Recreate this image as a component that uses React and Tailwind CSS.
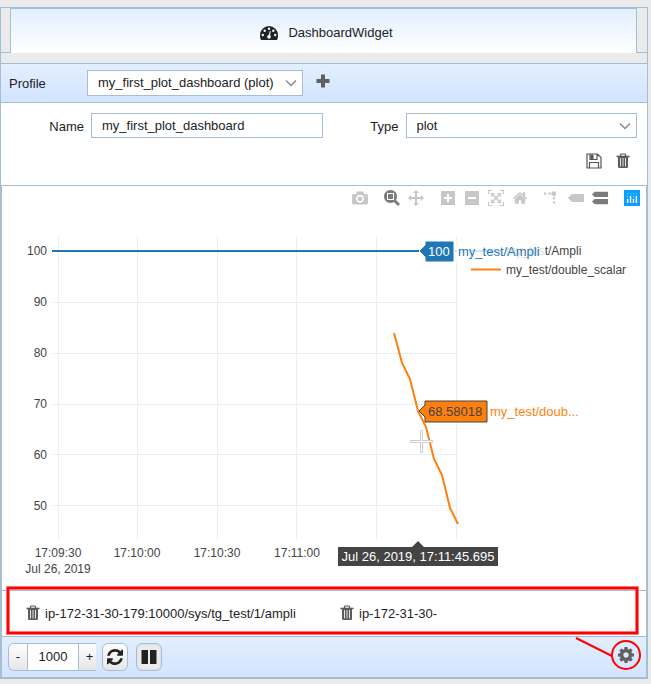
import React from "react";

const MODE_ICONS = {
  camera: {
    width: 1000,
    path: "m500 450c-83 0-150-67-150-150 0-83 67-150 150-150 83 0 150 67 150 150 0 83-67 150-150 150z m400 150h-120c-16 0-34 13-39 29l-31 93c-6 15-23 28-40 28h-340c-16 0-34-13-39-28l-31-94c-6-15-23-28-40-28h-120c-55 0-100-45-100-100v-450c0-55 45-100 100-100h800c55 0 100 45 100 100v450c0 55-45 100-100 100z m-400-550c-138 0-250 112-250 250 0 138 112 250 250 250 138 0 250-112 250-250 0-138-112-250-250-250z m365 380c-19 0-35 16-35 35 0 19 16 35 35 35 19 0 35-16 35-35 0-19-16-35-35-35z",
  },
  zoom: {
    width: 1000,
    path: "m1000-25l-250 251c40 63 63 138 63 218 0 224-182 406-407 406-224 0-406-182-406-406s183-406 407-406c80 0 155 22 218 62l250-250 125 125z m-812 250l0 438 437 0 0-438-437 0z m62 375l313 0 0-312-313 0 0 312z",
  },
  pan: {
    width: 1000,
    path: "m1000 350l-187 188 0-125-250 0 0 250 125 0-188 187-187-187 125 0 0-250-250 0 0 125-188-188 186-187 0 125 252 0 0-250-125 0 187-188 188 188-125 0 0 250 250 0 0-126 187 188z",
  },
  zoomIn: {
    width: 875,
    path: "m1 787l0-875 875 0 0 875-875 0z m687-500l-187 0 0-187-125 0 0 187-188 0 0 125 188 0 0 187 125 0 0-187 187 0 0-125z",
  },
  zoomOut: {
    width: 875,
    path: "m0 788l0-876 875 0 0 876-875 0z m688-500l-500 0 0 125 500 0 0-125z",
  },
  autoscale: {
    width: 1000,
    path: "m250 850l-187 0-63 0 0-62 0-188 63 0 0 188 187 0 0 62z m688 0l-188 0 0-62 188 0 0-188 62 0 0 188 0 62-62 0z m-875-938l0 188-63 0 0-188 0-62 63 0 187 0 0 62-187 0z m875 188l0-188-188 0 0-62 188 0 62 0 0 62 0 188-62 0z m-125 188l-1 0-93-94-156 156 156 156 92-93 2 0 0 250-250 0 0-2 93-92-156-156-156 156 94 92 0 2-250 0 0-250 0 0 93 93 157-156-157-156-93 94 0 0 0-250 250 0 0 0-94 93 156 157 156-157-93-93 0 0 250 0 0 250z",
  },
  home: {
    width: 928,
    path: "m786 296v-267q0-15-11-26t-25-10h-214v214h-143v-214h-214q-15 0-25 10t-11 26v267q0 1 0 2t0 2l321 264 321-264q1-1 1-4z m124 39l-34-41q-5-5-12-6h-2q-7 0-12 3l-386 322-386-322q-7-4-13-4-7 2-12 7l-35 41q-4 5-3 13t6 12l401 334q18 15 42 15t43-15l136-114v109q0 8 5 13t13 5h107q8 0 13-5t5-13v-227l122-102q5-5 6-12t-4-13z",
  },
  spike: {
    width: 1000,
    transform: "matrix(1.5 0 0 -1.5 0 850)",
    path: "M512 409c0-57-46-104-103-104-57 0-104 47-104 104 0 57 47 103 104 103 57 0 103-46 103-103z m-327-39l92 0 0 92-92 0z m-185 0l92 0 0 92-92 0z m370-186l92 0 0 93-92 0z m0-184l92 0 0 92-92 0z",
  },
  closest: {
    width: 1500,
    path: "m375 725l0 0-375-375 375-374 0-1 1125 0 0 750-1125 0z",
  },
  compare: {
    width: 1125,
    path: "m187 786l0 2-187-188 188-187 0 0 937 0 0 373-938 0z m0-499l0 1-187-188 188-188 0 0 937 0 0 376-938-1z",
  },
};

const MODE_GROUPS = [
  [["camera", "Download plot"]],
  [["zoom", "Zoom", true], ["pan", "Pan"]],
  [["zoomIn", "Zoom in"], ["zoomOut", "Zoom out"], ["autoscale", "Autoscale"], ["home", "Reset axes"]],
  [["spike", "Toggle spike lines"], ["closest", "Show closest data on hover"], ["compare", "Compare data on hover", true]],
];

function ModeButton({ icon, label, active }) {
  const { width, path, transform } = MODE_ICONS[icon];
  return (
    <button type="button" aria-label={label} className="p-1">
      <svg viewBox={`0 0 ${width} 1000`} className={active ? "size-4 fill-[#7b7b7b]" : "size-4 fill-[#c7c7c7]"}>
        <path d={path} transform={transform || "matrix(1 0 0 -1 0 850)"} />
      </svg>
    </button>
  );
}

function ModeBar() {
  return (
    <div className="flex h-6 justify-end gap-2 pr-0.5">
      {MODE_GROUPS.map((group) => (
        <div key={group[0][0]} className="flex">
          {group.map(([icon, label, active]) => (
            <ModeButton key={icon} icon={icon} label={label} active={active} />
          ))}
        </div>
      ))}
      <a href="#plotly" aria-label="Produced with Plotly" className="block p-1">
        <svg viewBox="0 0 132 132" className="size-4">
          <rect width="132" height="132" fill="#119dff" />
          <g fill="#25fefd">
            <circle cx="102" cy="30" r="6" />
            <circle cx="78" cy="30" r="6" />
            <circle cx="78" cy="54" r="6" />
            <circle cx="54" cy="30" r="6" />
            <circle cx="30" cy="30" r="6" />
            <circle cx="30" cy="54" r="6" />
          </g>
          <g stroke="#fff" strokeWidth="12" strokeLinecap="round">
            <path d="M30 78V102M78 78V102M54 54V102M102 54V102" />
          </g>
        </svg>
      </a>
    </div>
  );
}

function TrashIcon() {
  return (
    <svg viewBox="0 0 14 16" className="h-4 w-3.5 shrink-0" fill="none" stroke="#5a5a5a">
      <path d="M4.500 3V1.500Q4.500 1 5 1H9Q9.500 1 9.500 1.500V3" strokeWidth="1.200" />
      <path d="M0.500 3.500H13.500" strokeWidth="1.600" />
      <path d="M2 4H12V14Q12 15 10.500 15H3.500Q2 15 2 14Z" fill="#5a5a5a" stroke="none" />
      <path d="M4.500 5V13.500M7 5V13.500M9.500 5V13.500" stroke="#e4e4e4" strokeWidth="1" />
    </svg>
  );
}

function Chevron() {
  return (
    <svg viewBox="0 0 12 8" className="pointer-events-none absolute top-1/2 right-1.5 h-2 w-3 -translate-y-1/2" fill="none" stroke="#888" strokeWidth="1.400">
      <path d="M1 1.500L6 6.500L11 1.500" />
    </svg>
  );
}

const Y_TICKS = [[100, 251], [90, 302], [80, 353], [70, 404], [60, 455], [50, 506]];
const X_TICKS = [["17:09:30", 58], ["17:10:00", 137], ["17:10:30", 217], ["17:11:00", 297]];
const X_GRID = [58, 137, 217, 296, 376, 456];

function Chart() {
  return (
    <svg viewBox="2 210 644 380" className="block h-[380px] w-full font-['Liberation_Sans',Arial,sans-serif]" role="img" aria-label="Ampli and double_scalar over time">
      <g fill="#eee">
        {X_GRID.map((x) => <rect key={x} x={x} y="236" width="1" height="304" />)}
        {Y_TICKS.slice(1).map(([v, y]) => <rect key={v} x="52" y={v > 60 ? y : y - 1} width="405" height="1" />)}
      </g>
      <g fill="#444" fontSize="12">
        {Y_TICKS.map(([v, y]) => <text key={v} x="47" y={y + 4} textAnchor="end">{v}</text>)}
        {X_TICKS.map(([t, x]) => <text key={t} x={x} y="557" textAnchor="middle">{t}</text>)}
        <text x="58" y="573" textAnchor="middle">Jul 26, 2019</text>
        <text x="506" y="255">my_test/Ampli</text>
        <text x="506" y="274">my_test/double_scalar</text>
      </g>
      <path d="M471 251H501" stroke="#1f77b4" strokeWidth="2" />
      <path d="M471 269.500H501" stroke="#ff7f0e" strokeWidth="2" />
      <path d="M52 251H457" stroke="#1f77b4" strokeWidth="2" />
      <path d="M394 333L402 363L410 379L418 411L426 427L434 459L442 475L450 508L458 524" fill="none" stroke="#ff7f0e" strokeWidth="2" />

      <rect x="454" y="241" width="91" height="21" fill="#fff" opacity="0.8" />
      <path d="M419 251L425 245V241H454V262H425V257Z" fill="#1f77b4" stroke="#fff" />
      <text x="428" y="256" fontSize="13" fill="#fff">100</text>
      <text x="458" y="256" fontSize="13" fill="#1f77b4">my_test/Ampli</text>

      <path d="M419 411L425 405V401H487V422H425V417Z" fill="#ff7f0e" stroke="#444" />
      <text x="428" y="416" fontSize="13" fill="#444">68.58018</text>
      <text x="490" y="416" fontSize="13" fill="#ff7f0e">my_test/doub...</text>

      <path d="M420.500 430.500H422.500V440.500H432.500V442.500H422.500V452.500H420.500V442.500H410.500V440.500H420.500Z" fill="#fff" stroke="#ccc" strokeWidth="1" />

      <path d="M418 541L424 547H498V566H338V547H412Z" fill="#444" />
      <text x="418" y="561" fontSize="13" fill="#fff" textAnchor="middle">Jul 26, 2019, 17:11:45.695</text>
    </svg>
  );
}

const fieldClass = "w-full appearance-none border border-[#a4bed4] bg-white px-2.5 text-[13px] text-[#222] outline-none";

export default function App() {
  return (
    <div className="min-h-screen bg-[#ebebeb] pt-[7px] pr-[3px] font-['Liberation_Sans',Arial,sans-serif] text-[13px] text-[#222]">
      <main className="border border-[#a4bed4]">
        <header className="mb-2.5 flex h-[45px]">
          <div className="w-2.5 border-r border-b border-[#a4bed4]" />
          <h1 className="flex flex-1 items-center justify-center gap-2.5 border-t border-[#a4bed4] bg-linear-to-b from-[#e2efff] to-white pt-1 pl-1.5">
            <svg viewBox="0 0 18 14" className="h-3.5 w-[18px]">
              <path d="M9 0A9 9 0 0 0 0 9C0 11 .3 12.700 .8 13.500Q1 14 1.500 14H16.500Q17 14 17.200 13.500C17.700 12.700 18 11 18 9A9 9 0 0 0 9 0Z" fill="#222" />
              <g fill="#f2f8ff">
                <circle cx="2.800" cy="9" r="1.200" /><circle cx="4.700" cy="4.700" r="1.200" /><circle cx="9" cy="2.800" r="1.200" />
                <circle cx="13.300" cy="4.700" r="1.200" /><circle cx="15.200" cy="9" r="1.200" /><circle cx="9" cy="10.800" r="1.900" />
                <path d="M8.500 10L9.800 5L10.800 5.200L9.800 10.500Z" />
              </g>
            </svg>
            <span>DashboardWidget</span>
          </h1>
          <div className="w-[11px] border-b border-l border-[#a4bed4]" />
        </header>

        <div className="flex h-10 items-center border-y border-[#a4bed4] bg-linear-to-b from-[#e2efff] to-[#d3e4ff] pl-2">
          <label htmlFor="profile" className="w-[78px] pt-0.5">Profile</label>
          <div className="relative w-[216px]">
            <select id="profile" className={`${fieldClass} h-[26px]`}>
              <option>my_first_plot_dashboard (plot)</option>
            </select>
            <Chevron />
          </div>
          <button type="button" aria-label="Add profile" className="mb-1 ml-[13px]">
            <svg viewBox="0 0 14 14" className="size-3.5"><path d="M7 0.500V13.500M0.500 7H13.500" stroke="#606060" strokeWidth="4" /></svg>
          </button>
        </div>

        <form className="bg-white px-2.5 pt-2.5 pb-4">
          <div className="flex items-center">
            <label htmlFor="name" className="w-20 pt-0.5 pr-[7px] text-right">Name</label>
            <div className="flex-1"><input id="name" defaultValue="my_first_plot_dashboard" className={`${fieldClass} block h-[25px]`} /></div>
            <label htmlFor="type" className="w-[83px] pt-0.5 pr-[7px] text-right">Type</label>
            <div className="relative flex-1">
              <select id="type" className={`${fieldClass} block h-[25px]`}><option>plot</option></select>
              <Chevron />
            </div>
          </div>
          <div className="mt-[15px] flex justify-end gap-3.5 pr-[7px]">
            <button type="button" aria-label="Save">
              <svg viewBox="0 0 16 16" className="size-4" fill="none" stroke="#555" strokeWidth="1.200">
                <path d="M1 1H11.500L15 4.500V15H1ZM3.500 15V9.500H12.500V15M4 1V6.500H11V1" />
                <path d="M4.500 1.500H7.500V6H4.500Z" fill="#555" stroke="none" />
              </svg>
            </button>
            <button type="button" aria-label="Delete"><TrashIcon /></button>
          </div>
        </form>

        <section className="relative -mx-px -mb-px border-2 border-t border-[#a4bed4]">
          <div className="bg-white">
            <ModeBar />
            <Chart />
            <ul className="grid h-[46px] grid-cols-2 items-center border-t border-[#a4bed4] px-6">
              <li className="flex items-center gap-[5px]">
                <button type="button" aria-label="Remove ampli" className="pb-0.5"><TrashIcon /></button>
                <span>ip-172-31-30-179:10000/sys/tg_test/1/ampli</span>
              </li>
              <li className="flex items-center gap-[5px] pl-4">
                <button type="button" aria-label="Remove attribute" className="pb-0.5"><TrashIcon /></button>
                <span>ip-172-31-30-</span>
              </li>
            </ul>
          </div>
          <footer className="flex h-[41px] items-center border-t border-[#a4bed4] bg-linear-to-b from-[#e2efff] to-[#d3e4ff] pr-3 pl-1.5">
            <div className="flex h-7 w-[88px] overflow-hidden rounded-l-md border border-r-0 border-[#a4bed4]">
              <button type="button" className="w-[18px] bg-linear-to-b from-white to-[#e6e6e6]">-</button>
              <input aria-label="Update period" defaultValue="1000" className="w-[52px] border-x border-[#a4bed4] bg-white text-center outline-none" />
              <button type="button" className="flex-1 bg-linear-to-b from-white to-[#e6e6e6] pl-1">+</button>
            </div>
            <button type="button" aria-label="Refresh" className="ml-1.5 flex h-7 w-[26px] items-center justify-center rounded-md border border-[#a4bed4] bg-linear-to-b from-white to-[#e6e6e6]">
              <svg viewBox="0 0 1536 1536" className="size-4" fill="#222">
                <path d="M1511 928q0 5-1 7-64 268-268 434.500T764 1536q-146 0-282.500-55T238 1324l-129 129q-19 19-45 19t-45-19-19-45V960q0-26 19-45t45-19h448q26 0 45 19t19 45-19 45l-137 137q71 66 161 102t187 36q134 0 250-65t186-179q11-17 53-117 8-23 30-23h192q13 0 22.500 9.500t9.500 22.500zm25-800v448q0 26-19 45t-45 19h-448q-26 0-45-19t-19-45 19-45l138-138Q969 256 768 256q-134 0-250 65T332 500q-11 17-53 117-8 23-30 23H50q-13 0-22.500-9.500T18 608v-7q65-268 270-434.500T768 0q146 0 284 55.500T1297 212l130-129q19-19 45-19t45 19 19 45z" />
              </svg>
            </button>
            <button type="button" aria-label="Pause" className="ml-2 flex h-7 w-[26px] items-center justify-center rounded-md border border-[#a4bed4] bg-[#ececec] shadow-[inset_0_0_3px_#d0d0d0]">
              <svg viewBox="0 0 16 16" className="size-4" fill="#222"><path d="M0.500 1H7V15H0.500ZM9 1H15.500V15H9Z" /></svg>
            </button>
            <button type="button" aria-label="Settings" className="mb-1 ml-auto">
              <svg viewBox="0 0 1536 1536" className="size-4" fill="#606060">
                <path d="M1024 768q0-106-75-181t-181-75-181 75-75 181 75 181 181 75 181-75 75-181zm512-109v222q0 12-8 23t-20 13l-185 28q-19 54-39 91 35 50 107 138 10 12 10 25t-9 23q-27 37-99 108t-94 71q-12 0-26-9l-138-108q-44 23-91 38-16 136-29 186-7 28-36 28H657q-14 0-24.500-8.500T621 1506l-28-184q-49-16-90-37l-141 107q-10 9-25 9-14 0-25-11-126-114-165-168-7-10-7-23 0-12 8-23 15-21 51-66.500t54-70.500q-27-50-41-99L29 913q-13-2-21-12.500T0 877V655q0-12 8-23t19-13l186-28q14-46 39-92-40-57-107-138-10-12-10-24 0-10 9-23 26-36 98.500-107.500T337 135q13 0 26 10l138 107q44-23 91-38 16-136 29-186 7-28 36-28h222q14 0 24.500 8.500T915 30l28 184q49 16 90 37l142-107q9-9 24-9 13 0 25 10 129 119 165 170 7 8 7 22 0 12-8 23-15 21-51 66.500t-54 70.500q26 50 41 98l183 28q13 2 21 12.500t8 23.500z" />
              </svg>
            </button>
          </footer>

          <svg viewBox="0 0 644 98" className="pointer-events-none absolute right-0 bottom-0 left-0 h-[98px] w-full" fill="none" aria-hidden="true">
            <rect x="6" y="9" width="629" height="45" stroke="#ff9a9a" strokeWidth="4" />
            <rect x="6" y="9" width="629" height="45" stroke="#f00" strokeWidth="2.500" />
            <circle cx="624" cy="76" r="14" stroke="#f00" strokeWidth="2" />
            <path d="M574 59L610 77" stroke="#f00" strokeWidth="2" />
          </svg>
        </section>
      </main>
    </div>
  );
}
